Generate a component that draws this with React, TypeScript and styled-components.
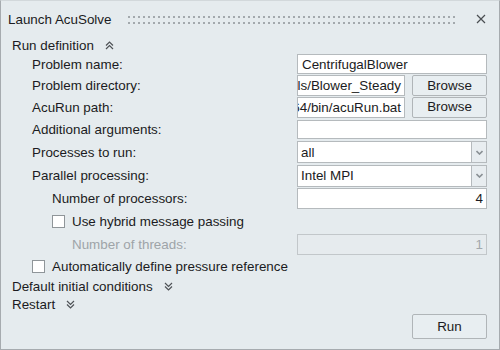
import { createGlobalStyle, styled } from 'styled-components'

const GlobalStyle = createGlobalStyle`
  html, body {
    margin: 0;
    padding: 0;
    background: #e5ebee;
  }
  body {
    font-family: 'Liberation Sans', Arial, sans-serif;
    font-size: 13.4px;
    color: #1b1b22;
  }
`

const Window = styled.div`
  width: 500px;
  height: 350px;
  box-sizing: border-box;
  background: #e5ebee;
  border: 1px solid #a6abaf;
  border-top-color: #d2d8db;
  display: flex;
  flex-direction: column;
`

const TitleBar = styled.div`
  height: 36px;
  display: flex;
  align-items: center;
  padding: 0 12px 0 7px;
  gap: 17px;
`

const Title = styled.div`
  white-space: nowrap;
`

const Grip = styled.div`
  flex: 1;
  height: 8px;
  margin-top: 1px;
  background-image: linear-gradient(to right, #a3a9ad 2px, transparent 2px);
  background-size: 5px 6px;
  background-repeat: repeat;
  mask-image: linear-gradient(to bottom, #000 2px, transparent 2px);
  mask-size: 100% 6px;
`

const CloseButton = styled.div`
  width: 12px;
  height: 12px;
  display: flex;
  align-items: center;
  justify-content: center;
`

const Body = styled.div`
  display: flex;
  flex-direction: column;
  padding: 0 12px 0 11px;
  flex: 1;
`

const SectionHeader = styled.div<{ $h: number }>`
  height: ${({ $h }) => $h}px;
  display: flex;
  align-items: center;
  gap: 11px;
  white-space: nowrap;
`

const Row = styled.div<{ $h: number }>`
  height: ${({ $h }) => $h}px;
  display: flex;
  align-items: center;
`

const Label = styled.div<{ $level: number; $disabled?: boolean }>`
  flex: 1;
  padding-left: ${({ $level }) => $level * 20}px;
  color: ${({ $disabled }) => ($disabled ? '#9ea4a8' : 'inherit')};
  white-space: nowrap;
`

const FieldArea = styled.div`
  width: 190px;
  display: flex;
  gap: 7px;
`

const TextField = styled.div<{
  $h?: number
  $align?: 'left' | 'right'
  $disabled?: boolean
}>`
  flex: 1;
  min-width: 0;
  box-sizing: border-box;
  height: ${({ $h }) => $h ?? 21}px;
  background: ${({ $disabled }) => ($disabled ? '#e6ebee' : '#ffffff')};
  border: 1px solid ${({ $disabled }) => ($disabled ? '#c2c7ca' : '#b5babd')};
  color: ${({ $disabled }) => ($disabled ? '#a2a8ac' : 'inherit')};
  display: flex;
  align-items: center;
  justify-content: ${({ $align }) => ($align === 'right' ? 'flex-end' : 'flex-start')};
  padding: 0 3px 0 4px;
  overflow: hidden;
  white-space: nowrap;
`

const Button = styled.div<{ $w: number; $h: number }>`
  width: ${({ $w }) => $w}px;
  height: ${({ $h }) => $h}px;
  box-sizing: border-box;
  flex-shrink: 0;
  border: 1px solid #b0b5b8;
  border-radius: 2px;
  background: #e8eef1;
  display: flex;
  align-items: center;
  justify-content: center;
  padding-bottom: 1px;
`

const Combo = styled.div`
  flex: 1;
  height: 22px;
  box-sizing: border-box;
  border: 1px solid #b5babd;
  background: #ffffff;
  display: flex;
`

const ComboValue = styled.div`
  flex: 1;
  display: flex;
  align-items: center;
  padding: 0 3px;
`

const ComboArrow = styled.div`
  width: 14px;
  border-left: 1px solid #b5babd;
  background: #e8edf0;
  display: flex;
  align-items: center;
  justify-content: center;
`

const CheckRow = styled.label<{ $level: number }>`
  display: flex;
  align-items: center;
  gap: 7px;
  padding-left: ${({ $level }) => $level * 20}px;
  white-space: nowrap;
`

const Box = styled.span`
  width: 13px;
  height: 13px;
  box-sizing: border-box;
  background: #ffffff;
  border: 1px solid #8f9599;
`

const Footer = styled.div`
  display: flex;
  justify-content: flex-end;
  padding-top: 1px;
`

const DoubleChevron = ({ up }: { up?: boolean }) => (
  <svg width="9" height="9" viewBox="0 0 9 9">
    <g
      fill="none"
      stroke="#4f5357"
      strokeWidth="1.2"
      transform={up ? undefined : 'rotate(180 4.5 4.5)'}
    >
      <path d="M1 4.5 L4.5 1 L8 4.5" />
      <path d="M1 8 L4.5 4.5 L8 8" />
    </g>
  </svg>
)

const SmallDown = () => (
  <svg width="7" height="5" viewBox="0 0 7 5">
    <path d="M0.5 1 L3.5 4 L6.5 1" fill="none" stroke="#8a9094" strokeWidth="1.6" />
  </svg>
)

const CloseIcon = () => (
  <svg width="10" height="10" viewBox="0 0 10 10">
    <path d="M1 1 L9 9 M9 1 L1 9" stroke="#4a4e52" strokeWidth="1.2" />
  </svg>
)

export default function App() {
  return (
    <>
      <GlobalStyle />
      <Window>
        <TitleBar>
          <Title>Launch AcuSolve</Title>
          <Grip />
          <CloseButton>
            <CloseIcon />
          </CloseButton>
        </TitleBar>
        <Body>
          <SectionHeader $h={16}>
            Run definition <DoubleChevron up />
          </SectionHeader>

          <Row $h={22}>
            <Label $level={1}>Problem name:</Label>
            <FieldArea>
              <TextField $h={20}>CentrifugalBlower</TextField>
            </FieldArea>
          </Row>
          <Row $h={21}>
            <Label $level={1}>Problem directory:</Label>
            <FieldArea>
              <TextField $align="right">ls/Blower_Steady</TextField>
              <Button $w={75} $h={21}>Browse</Button>
            </FieldArea>
          </Row>
          <Row $h={22}>
            <Label $level={1}>AcuRun path:</Label>
            <FieldArea>
              <TextField $align="right">64/bin/acuRun.bat</TextField>
              <Button $w={75} $h={21}>Browse</Button>
            </FieldArea>
          </Row>
          <Row $h={22}>
            <Label $level={1}>Additional arguments:</Label>
            <FieldArea>
              <TextField $h={19} />
            </FieldArea>
          </Row>
          <Row $h={24}>
            <Label $level={1}>Processes to run:</Label>
            <FieldArea>
              <Combo>
                <ComboValue>all</ComboValue>
                <ComboArrow>
                  <SmallDown />
                </ComboArrow>
              </Combo>
            </FieldArea>
          </Row>
          <Row $h={23}>
            <Label $level={1}>Parallel processing:</Label>
            <FieldArea>
              <Combo>
                <ComboValue>Intel MPI</ComboValue>
                <ComboArrow>
                  <SmallDown />
                </ComboArrow>
              </Combo>
            </FieldArea>
          </Row>
          <Row $h={23}>
            <Label $level={2}>Number of processors:</Label>
            <FieldArea>
              <TextField $align="right">4</TextField>
            </FieldArea>
          </Row>
          <Row $h={23}>
            <CheckRow $level={2}>
              <Box />
              Use hybrid message passing
            </CheckRow>
          </Row>
          <Row $h={22}>
            <Label $level={3} $disabled>
              Number of threads:
            </Label>
            <FieldArea>
              <TextField $align="right" $disabled>
                1
              </TextField>
            </FieldArea>
          </Row>
          <Row $h={22}>
            <CheckRow $level={1}>
              <Box />
              Automatically define pressure reference
            </CheckRow>
          </Row>

          <SectionHeader $h={18}>
            Default initial conditions <DoubleChevron />
          </SectionHeader>
          <SectionHeader $h={18}>
            Restart <DoubleChevron />
          </SectionHeader>

          <Footer>
            <Button $w={75} $h={25}>Run</Button>
          </Footer>
        </Body>
      </Window>
    </>
  )
}
